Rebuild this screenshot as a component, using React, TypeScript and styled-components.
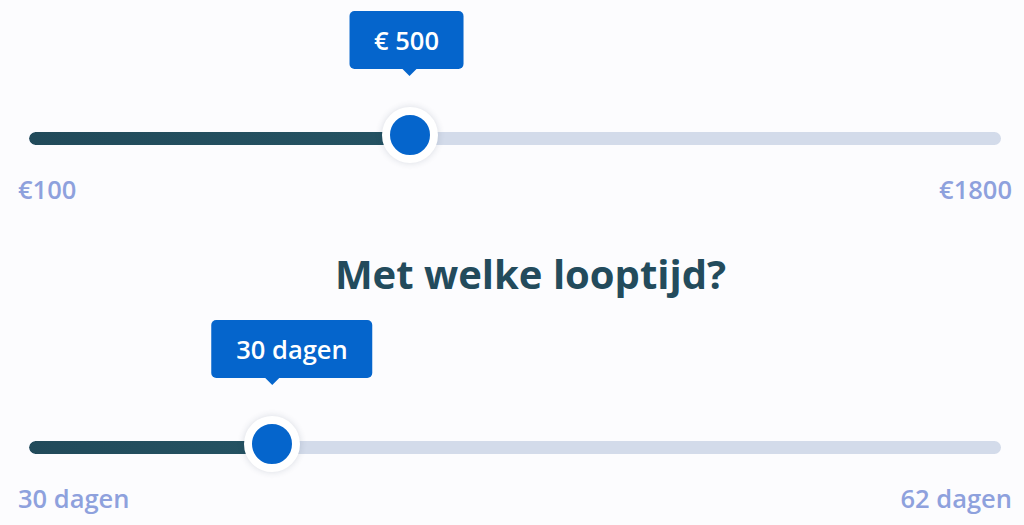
import React from 'react';
import styled, { createGlobalStyle } from 'styled-components';

const GlobalStyle = createGlobalStyle`
  html, body {
    margin: 0;
    padding: 0;
    background: #fcfcfe;
  }
  body {
    font-family: 'Open Sans', 'Liberation Sans', sans-serif;
  }
`;

const Page = styled.div`
  width: 1024px;
  height: 525px;
  box-sizing: border-box;
  padding: 0 12px 0 18px;
  overflow: hidden;
`;

const SliderBlock = styled.section<{ $top: number }>`
  padding-top: ${props => props.$top}px;
  display: flex;
  flex-direction: column;
`;

const TrackArea = styled.div`
  position: relative;
  height: 60px;
  margin: 0 11px;
  display: flex;
  align-items: center;
`;

const Track = styled.div`
  position: relative;
  width: 100%;
  height: 13px;
  border-radius: 7px;
  background: #d3dbea;
  overflow: hidden;
`;

const Fill = styled.div`
  height: 100%;
  border-radius: 7px;
  background: linear-gradient(90deg, #214a5a 0%, #255363 100%);
`;

const Thumb = styled.div`
  position: absolute;
  top: calc(50% - 3px);
  width: 40px;
  height: 40px;
  border-radius: 50%;
  background: #0565cc;
  border: 8px solid #ffffff;
  box-shadow: 0 0 7px rgba(30, 50, 80, 0.16);
  transform: translate(-50%, -50%);
`;

// $shift moves the bubble sideways while the arrow stays on the thumb
const Tooltip = styled.div<{ $shift: number }>`
  position: absolute;
  bottom: calc(100% + 46px);
  left: 50%;
  transform: translateX(calc(-50% + ${props => props.$shift}px));
  height: 58px;
  padding: 0 25px;
  display: flex;
  align-items: center;
  white-space: nowrap;
  background: #0565cc;
  color: #ffffff;
  border-radius: 5px;
  font-size: 25.5px;
  font-weight: 600;

  &::after {
    content: '';
    position: absolute;
    top: 100%;
    left: calc(50% - ${props => props.$shift}px);
    transform: translateX(-50%);
    border-left: 7px solid transparent;
    border-right: 7px solid transparent;
    border-top: 7px solid #0565cc;
  }
`;

const Labels = styled.div`
  margin-top: 5px;
  display: flex;
  justify-content: space-between;
  font-size: 25.5px;
  font-weight: 600;
  color: #8ea1dd;
  line-height: 33px;
`;

const Heading = styled.h2`
  margin: 42px 0 0;
  text-align: center;
  font-size: 40px;
  font-weight: 700;
  line-height: 52px;
  color: #234b5c;
  padding-left: 31px;
`;

interface SliderProps {
  top: number;
  percent: number;
  shift: number;
  value: string;
  min: string;
  max: string;
}

const RangeSlider: React.FC<SliderProps> = ({ top, percent, shift, value, min, max }) => (
  <SliderBlock $top={top}>
    <TrackArea>
      <Track>
        <Fill style={{ width: `${percent}%` }} />
      </Track>
      <Thumb style={{ left: `${percent}%` }}>
        <Tooltip $shift={shift}>{value}</Tooltip>
      </Thumb>
    </TrackArea>
    <Labels>
      <span>{min}</span>
      <span>{max}</span>
    </Labels>
  </SliderBlock>
);

const App: React.FC = () => (
  <>
    <GlobalStyle />
    <Page>
      <RangeSlider top={108} percent={39.15} shift={-3} value="€ 500" min="€100" max="€1800" />
      <Heading>Met welke looptijd?</Heading>
      <RangeSlider top={117} percent={25} shift={20} value="30 dagen" min="30 dagen" max="62 dagen" />
    </Page>
  </>
);

export default App;
